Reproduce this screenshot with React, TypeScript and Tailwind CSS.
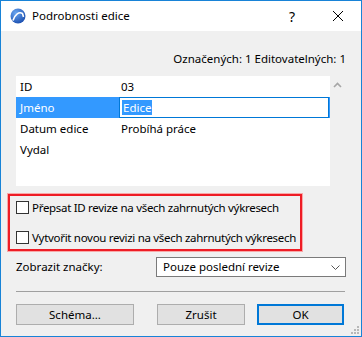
import { useState } from 'react';

function AppIcon() {
  return (
    <svg width="16" height="16" viewBox="0 0 16 16">
      <defs>
        <radialGradient id="g" cx="35%" cy="30%" r="75%">
          <stop offset="0%" stopColor="#6aa6f0" />
          <stop offset="100%" stopColor="#1b4fb0" />
        </radialGradient>
      </defs>
      <circle cx="8" cy="8" r="7.5" fill="url(#g)" />
      <path d="M3 12.5 C5 6, 9 3.5, 12.5 5.5 L13.5 9" fill="none" stroke="#fff" strokeWidth="1.6" />
    </svg>
  );
}

function Check({ label }: { label: string }) {
  const [on, setOn] = useState(false);
  return (
    <label className="flex items-center h-[13px] cursor-default whitespace-nowrap" onClick={() => setOn(!on)}>
      <span className="w-[13px] h-[13px] shrink-0 border border-[#333333] bg-white flex items-center justify-center">
        {on && <span className="w-[7px] h-[7px] bg-[#333]" />}
      </span>
      <span className="ml-[3px] tracking-[-0.3px]">{label}</span>
    </label>
  );
}

const rows = [
  { k: 'ID', v: '03' },
  { k: 'Jméno', v: 'Edice' },
  { k: 'Datum edice', v: 'Probíhá práce' },
  { k: 'Vydal', v: '' },
];

export default function App() {
  return (
    <div
      className="w-[362px] h-[337px] border border-[#1883d7] bg-[#f0f0f0] flex flex-col text-[11.5px] text-black whitespace-nowrap"
      style={{ fontFamily: '"Noto Sans", "Open Sans", sans-serif' }}
    >
      <div className="h-[30px] bg-white flex items-center shrink-0">
        <div className="ml-[9px] mr-[6px] flex items-center"><AppIcon /></div>
        <span className="text-[11.5px]">Podrobnosti edice</span>
        <span className="ml-auto w-[46px] text-center text-[14px]">?</span>
        <span className="w-[46px] flex items-center justify-center">
          <svg width="12" height="12" viewBox="0 0 12 12">
            <path d="M1 1 L11 11 M11 1 L1 11" stroke="#000" strokeWidth="1" />
          </svg>
        </span>
      </div>

      <div className="h-[45px] flex items-end justify-end pr-[15px] pb-[9px] shrink-0">
        <span className="leading-[16px]">Označených: 1 Editovatelných: 1</span>
      </div>

      <div className="flex shrink-0">
        <div className="ml-[15px] w-[314px] h-[110px] bg-white">
          {rows.map((r, i) => (
            <div
              key={r.k}
              className={`flex items-center h-[21px] ${i === 1 ? 'bg-[#3399ff] text-white' : ''}`}
            >
              <span className="w-[103px] pl-[4px]">{r.k}</span>
              {i === 1 ? (
                <div className="flex-1 h-[21px] mr-[1px] bg-white border border-[#0078d7] flex items-center pl-[2px]">
                  <span className="bg-[#3399ff] text-white leading-[15px] px-[1px]">{r.v}</span>
                </div>
              ) : (
                <span className="pl-[2px]">{r.v}</span>
              )}
            </div>
          ))}
        </div>
        <div className="ml-[3px] mt-[6px]">
          <svg width="9" height="6" viewBox="0 0 9 6">
            <path d="M1 5 L4.5 1.5 L8 5" fill="none" stroke="#a6a6a6" strokeWidth="1.6" />
          </svg>
        </div>
      </div>

      <div className="ml-[7px] mt-[8px] w-[294px] border-2 border-[#ee1c25] shadow-[0_0_0_1px_rgba(255,120,120,0.6)] pt-[5px] pb-[5px] pl-[6px] flex flex-col gap-[17px] shrink-0">
        <Check label="Přepsat ID revize na všech zahrnutých výkresech" />
        <Check label="Vytvořit novou revizi na všech zahrnutých výkresech" />
      </div>

      <div className="flex items-center mt-[6px] shrink-0">
        <span className="ml-[15px]">Zobrazit značky:</span>
        <div className="ml-auto mr-[15px] w-[190px] h-[20px] bg-white border border-[#7a7a7a] flex items-center pl-[6px] pr-[5px]">
          <span>Pouze poslední revize</span>
          <svg className="ml-auto" width="9" height="5" viewBox="0 0 9 5">
            <path d="M0.5 0.5 L4.5 4.5 L8.5 0.5" fill="none" stroke="#555" strokeWidth="1" />
          </svg>
        </div>
      </div>

      <div className="ml-[15px] mt-[14px] h-px bg-[#a0a0a0] mr-[16px] shrink-0" />

      <div className="flex mt-[12px] pl-[15px] shrink-0">
        <button className="w-[118px] h-[21px] bg-[#e1e1e1] border border-[#adadad]">Schéma...</button>
        <button className="ml-[23px] w-[88px] h-[21px] bg-[#e1e1e1] border border-[#adadad]">Zrušit</button>
        <button className="ml-[12px] w-[87px] h-[21px] bg-[#e1e1e1] border-2 border-[#0078d7]">OK</button>
      </div>

      <div className="flex-1 flex items-end justify-end pr-[2px] pb-[2px]">
        <svg width="8" height="8" viewBox="0 0 8 8" fill="#b8b8b8">
          <rect x="6" y="0" width="2" height="2" />
          <rect x="3" y="3" width="2" height="2" />
          <rect x="6" y="3" width="2" height="2" />
          <rect x="0" y="6" width="2" height="2" />
          <rect x="3" y="6" width="2" height="2" />
          <rect x="6" y="6" width="2" height="2" />
        </svg>
      </div>
    </div>
  );
}
